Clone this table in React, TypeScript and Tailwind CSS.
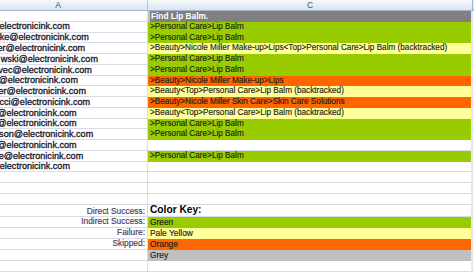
import React from 'react';

type Tone = 'green' | 'yellow' | 'orange' | 'grey' | 'white';

// fill colours used in the sheet
const TONE: Record<Tone, string> = {
  green: 'bg-[#99cc00]',
  yellow: 'bg-[#ffff99]',
  orange: 'bg-[#ff6600]',
  grey: 'bg-[#c0c0c0]',
  white: 'bg-white border-b border-[#d8dce6]',
};

const GREEN_PATH = '>Personal Care>Lip Balm';
const BACKTRACK = '>Beauty<Top>Personal Care>Lip Balm (backtracked)';

const ROWS: { email: string; shift: string; path: string; tone: Tone }[] = [
  { email: 'electronicink.com', shift: 'ml-[-0.5px]', path: GREEN_PATH, tone: 'green' },
  { email: 'ke@electronicink.com', shift: 'ml-[-0.3px]', path: GREEN_PATH, tone: 'green' },
  {
    email: 'er@electronicink.com',
    shift: 'ml-[-2.5px]',
    path: '>Beauty>Nicole Miller Make-up>Lips<Top>Personal Care>Lip Balm (backtracked)',
    tone: 'yellow',
  },
  { email: 'wski@electronicink.com', shift: 'ml-[0.8px]', path: GREEN_PATH, tone: 'green' },
  { email: 'vec@electronicink.com', shift: 'ml-[-1.7px]', path: GREEN_PATH, tone: 'green' },
  { email: '@electronicink.com', shift: 'ml-[-1.5px]', path: '>Beauty>Nicole Miller Make-up>Lips', tone: 'orange' },
  { email: 'er@electronicink.com', shift: 'ml-[-1.6px]', path: BACKTRACK, tone: 'yellow' },
  {
    email: 'cci@electronicink.com',
    shift: 'ml-[-0.5px]',
    path: '>Beauty>Nicole Miller Skin Care>Skin Care Solutions',
    tone: 'orange',
  },
  { email: '@electronicink.com', shift: 'ml-[-2.8px]', path: BACKTRACK, tone: 'yellow' },
  { email: '@electronicink.com', shift: 'ml-[-2.8px]', path: GREEN_PATH, tone: 'green' },
  { email: 'son@electronicink.com', shift: 'ml-[-0.9px]', path: GREEN_PATH, tone: 'green' },
  { email: '@electronicink.com', shift: 'ml-[-2.8px]', path: '', tone: 'white' },
  { email: 'e@electronicink.com', shift: 'ml-[-1.3px]', path: GREEN_PATH, tone: 'green' },
  { email: 'electronicink.com', shift: 'ml-[-0.3px]', path: '', tone: 'white' },
  { email: '', shift: 'ml-0', path: '', tone: 'white' },
  { email: '', shift: 'ml-0', path: '', tone: 'white' },
  { email: '', shift: 'ml-0', path: '', tone: 'white' },
];

const KEY: { label: string; name: string; tone: Tone }[] = [
  { label: 'Indirect Success:', name: 'Green', tone: 'green' },
  { label: 'Failure:', name: 'Pale Yellow', tone: 'yellow' },
  { label: 'Skipped:', name: 'Orange', tone: 'orange' },
  { label: '', name: 'Grey', tone: 'grey' },
  { label: '', name: '', tone: 'white' },
];

function Row({
  h,
  left,
  right,
  tone = 'white',
}: {
  h: string;
  left?: React.ReactNode;
  right?: React.ReactNode;
  tone?: Tone;
}) {
  return (
    <div className={`flex shrink-0 ${h}`}>
      <div className="ml-[-31px] flex w-[179px] shrink-0 items-end overflow-hidden border-r border-b border-[#d8dce6] bg-white pr-[2px]">
        {left}
      </div>
      <div className={`flex w-[323px] shrink-0 items-end overflow-hidden pl-[2px] ${TONE[tone]}`}>{right}</div>
      <div className="w-[2px] shrink-0 bg-[#e3e8f0]" />
      <div className="flex-1 border-b border-[#d8dce6] bg-white" />
    </div>
  );
}

export default function App() {
  return (
    <div className="flex h-[272px] w-[474px] flex-col overflow-hidden bg-white font-['Liberation_Sans',Arial,sans-serif]">
      {/* ── Column headers ─────────────────────────────── */}
      <div className="flex h-[11px] shrink-0 border-b border-[#9eb6ce] text-[8.5px] leading-none text-[#3f4f6b]">
        <div className="ml-[-31px] flex w-[179px] shrink-0 items-center justify-center border-r border-[#b9c6d8] bg-gradient-to-b from-[#f7f9fc] to-[#dce3ed]">
          A
        </div>
        <div className="flex w-[325px] shrink-0 items-center justify-center border-r border-[#9eb6ce] bg-gradient-to-b from-[#f7f9fc] to-[#dce3ed]">
          C
        </div>
        <div className="flex-1 bg-gradient-to-b from-[#f7f9fc] to-[#dce3ed]" />
      </div>

      {/* ── Task title ─────────────────────────────────── */}
      <Row
        h="h-[10.78px]"
        tone="grey"
        right={
          <div className="flex w-full items-end self-stretch bg-[#808080] pb-[1.5px] pl-[1px]">
            <span className="whitespace-nowrap text-[8.3px] leading-none font-bold text-white">Find Lip Balm.</span>
          </div>
        }
      />

      {/* ── Participant rows ───────────────────────────── */}
      {ROWS.map((r, i) => (
        <Row
          key={i}
          h="h-[10.78px]"
          tone={r.tone}
          left={
            <span
              className={`whitespace-nowrap pl-[31px] text-[9.1px] leading-none text-[#15152a] [-webkit-text-stroke:0.3px_#15152a] ${r.shift}`}
            >
              {r.email}
            </span>
          }
          right={
            <span className="whitespace-nowrap pb-[1.5px] text-[8.2px] leading-none text-[#1e1e1e] [-webkit-text-stroke:0.15px_#1e1e1e]">
              {r.path}
            </span>
          }
        />
      ))}

      {/* ── Colour key ─────────────────────────────────── */}
      <Row
        h="h-[12px]"
        left={
          <span className="w-full pb-[0.7px] text-right text-[8.4px] leading-none whitespace-nowrap text-[#4a3560] [-webkit-text-stroke:0.15px_#4a3560]">
            Direct Success:
          </span>
        }
        right={<span className="pb-[1px] text-[10.2px] leading-none font-bold text-black">Color Key:</span>}
      />
      {KEY.map((k, i) => (
        <Row
          key={i}
          h="h-[11px]"
          tone={k.tone}
          left={
            <span className="w-full pb-[1.2px] text-right text-[8.4px] leading-none whitespace-nowrap text-[#4a3560] [-webkit-text-stroke:0.15px_#4a3560]">
              {k.label}
            </span>
          }
          right={
            <span className="pb-[1.5px] text-[8.4px] leading-none text-[#1e1e1e] [-webkit-text-stroke:0.15px_#1e1e1e]">
              {k.name}
            </span>
          }
        />
      ))}
    </div>
  );
}
